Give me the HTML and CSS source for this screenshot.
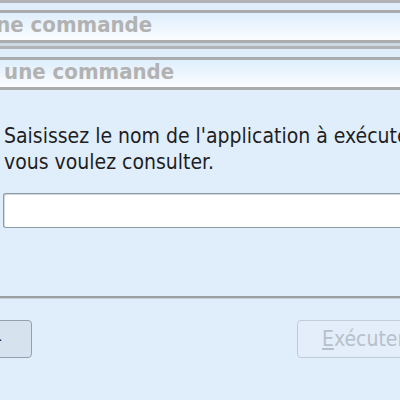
FILE: index.html
```html
<!DOCTYPE html>
<html lang="fr">
<head>
    <meta charset="UTF-8">
    <title>Exécuter une commande</title>
    <link rel="stylesheet" href="styles.css">
</head>
<body>
    <div class="frame-edge"></div>
    <div class="frame-gap"></div>
    <div class="title-bar back">
        <span class="title-text">Exécuter une commande</span>
    </div>
    <div class="frame-gap small"></div>
    <div class="frame-edge"></div>
    <div class="frame-gap wide"></div>
    <div class="title-bar">
        <span class="title-text">Exécuter une commande</span>
    </div>

    <div class="dialog">
        <p class="prompt">Saisissez le nom de l'application à exécuter<br>vous voulez consulter.</p>
        <div class="command-input"></div>
    </div>

    <div class="button-row">
        <button class="btn left">Options –</button>
        <button class="btn run" disabled><u>E</u>xécuter</button>
    </div>
</body>
</html>
```

FILE: styles.css
```css
body {
    font-family: 'DejaVu Sans Condensed', 'DejaVu Sans', sans-serif;
    background-color: #e0eefc;
    color: #1e1e1e;
    margin: 0;
    width: 400px;
    height: 400px;
    overflow: hidden;
}
.frame-edge {
    height: 3px;
    background-color: #b0b2b4;
}
.frame-gap {
    height: 7px;
}
.frame-gap.small {
    height: 3px;
    background-color: #ccd8e4;
}
.frame-gap.wide {
    height: 8px;
}
.title-bar {
    height: 27px;
    border-top: 3px solid #a9abad;
    border-bottom: 3px solid #a9abad;
    background: linear-gradient(#deeefc, #fbfdff);
    white-space: nowrap;
    overflow: hidden;
    font-weight: bold;
    font-size: 22px;
    line-height: 23px;
    color: #b2b2b2;
}
.title-text {
    display: inline-block;
    margin-left: -101px;
}
.back .title-text {
    margin-left: -123px;
}
.dialog {
    box-sizing: border-box;
    height: 208px;
    padding: 33px 0 0 4px;
    border-bottom: 2px solid #9c9ea0;
    box-shadow: 0 1px 0 #c6d0da;
    white-space: nowrap;
}
.prompt {
    margin: 0;
    font-size: 21px;
    line-height: 26px;
}
.command-input {
    margin-top: 18px;
    margin-left: -1px;
    height: 33px;
    background-color: #fff;
    border: 1px solid #8e9aa6;
    border-right: none;
    border-radius: 3px 0 0 3px;
    box-shadow: inset 1px 1px 0 #d4dae0;
}
.button-row {
    display: flex;
    justify-content: space-between;
    padding-top: 22px;
    white-space: nowrap;
}
.btn {
    box-sizing: border-box;
    height: 38px;
    font-family: inherit;
    font-size: 21px;
    border-radius: 4px;
    padding: 0;
}
.btn.left {
    width: 120px;
    margin-left: -88px;
    padding-right: 29px;
    text-align: right;
    background-color: #d6e2ee;
    border: 1px solid #93a1af;
    color: #1e1e1e;
}
.btn.run {
    width: 140px;
    margin-right: -37px;
    padding-left: 24px;
    text-align: left;
    background-color: #e3eefa;
    border: 1px solid #c0ccd8;
    color: #b6c0ca;
}
```
